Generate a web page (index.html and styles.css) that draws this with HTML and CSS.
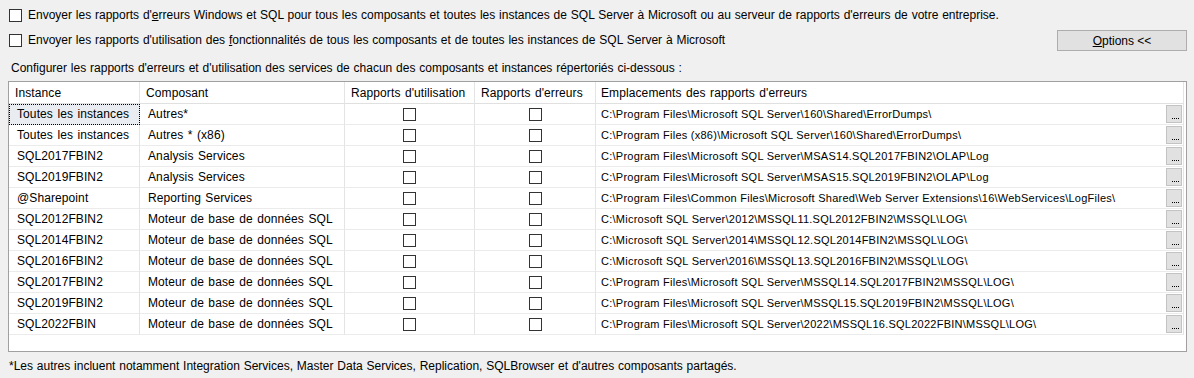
FILE: index.html
```html
<!DOCTYPE html>
<html lang="fr">
<head>
    <meta charset="UTF-8">
    <title>Rapports d'erreurs et d'utilisation</title>
    <link rel="stylesheet" href="styles.css">
</head>
<body>
    <div class="page">
        <label class="option first">
            <span class="box"></span>
            <span>Envoyer les rapports d'<u>e</u>rreurs Windows et SQL pour tous les composants et toutes les instances de SQL Server à Microsoft ou au serveur de rapports d'erreurs de votre entreprise.</span>
        </label>

        <div class="option-row">
            <label class="option">
                <span class="box"></span>
                <span>Envoyer les rapports d'utilisation des <u>f</u>onctionnalités de tous les composants et de toutes les instances de SQL Server à Microsoft</span>
            </label>
            <button class="btn"><u>O</u>ptions &lt;&lt;</button>
        </div>

        <p class="intro">Configurer les rapports d'erreurs et d'utilisation des services de chacun des composants et instances répertoriés ci-dessous :</p>

        <div class="grid" id="grid">
            <div class="head">Instance</div>
            <div class="head">Composant</div>
            <div class="head">Rapports d'utilisation</div>
            <div class="head">Rapports d'erreurs</div>
            <div class="head path">Emplacements des rapports d'erreurs</div>
        </div>

        <p class="note">*Les autres incluent notamment Integration Services, Master Data Services, Replication, SQLBrowser et d'autres composants partagés.</p>
    </div>

    <script>
        const rows = [
            ['Toutes les instances', 'Autres*', 'C:\\Program Files\\Microsoft SQL Server\\160\\Shared\\ErrorDumps\\'],
            ['Toutes les instances', 'Autres * (x86)', 'C:\\Program Files (x86)\\Microsoft SQL Server\\160\\Shared\\ErrorDumps\\'],
            ['SQL2017FBIN2', 'Analysis Services', 'C:\\Program Files\\Microsoft SQL Server\\MSAS14.SQL2017FBIN2\\OLAP\\Log'],
            ['SQL2019FBIN2', 'Analysis Services', 'C:\\Program Files\\Microsoft SQL Server\\MSAS15.SQL2019FBIN2\\OLAP\\Log'],
            ['@Sharepoint', 'Reporting Services', 'C:\\Program Files\\Common Files\\Microsoft Shared\\Web Server Extensions\\16\\WebServices\\LogFiles\\'],
            ['SQL2012FBIN2', 'Moteur de base de données SQL', 'C:\\Microsoft SQL Server\\2012\\MSSQL11.SQL2012FBIN2\\MSSQL\\LOG\\'],
            ['SQL2014FBIN2', 'Moteur de base de données SQL', 'C:\\Microsoft SQL Server\\2014\\MSSQL12.SQL2014FBIN2\\MSSQL\\LOG\\'],
            ['SQL2016FBIN2', 'Moteur de base de données SQL', 'C:\\Microsoft SQL Server\\2016\\MSSQL13.SQL2016FBIN2\\MSSQL\\LOG\\'],
            ['SQL2017FBIN2', 'Moteur de base de données SQL', 'C:\\Program Files\\Microsoft SQL Server\\MSSQL14.SQL2017FBIN2\\MSSQL\\LOG\\'],
            ['SQL2019FBIN2', 'Moteur de base de données SQL', 'C:\\Program Files\\Microsoft SQL Server\\MSSQL15.SQL2019FBIN2\\MSSQL\\LOG\\'],
            ['SQL2022FBIN', 'Moteur de base de données SQL', 'C:\\Program Files\\Microsoft SQL Server\\2022\\MSSQL16.SQL2022FBIN\\MSSQL\\LOG\\']
        ];

        const grid = document.getElementById('grid');

        rows.forEach((row, i) => {
            grid.insertAdjacentHTML('beforeend',
                `<div class="cell${i === 0 ? ' focus' : ''}">${row[0]}</div>` +
                `<div class="cell">${row[1]}</div>` +
                `<div class="cell center"><span class="box"></span></div>` +
                `<div class="cell center"><span class="box"></span></div>` +
                `<div class="cell path"><span class="path-text">${row[2]}</span><button class="browse"><span class="dots"></span></button></div>`
            );
        });
    </script>
</body>
</html>
```

FILE: styles.css
```css
body {
    margin: 0;
    background-color: #f0f0f0;
    font-family: "Liberation Sans", Arial, sans-serif;
    font-size: 12px;
    word-spacing: 0.5px;
    color: #000;
}

.page {
    padding: 0 7px 0 8px;
}

.option {
    display: flex;
    align-items: center;
    gap: 6px;
    line-height: 13px;
    white-space: nowrap;
}

.option.first {
    margin-top: 9px;
    margin-left: 1px;
}

.option-row {
    display: flex;
    justify-content: space-between;
    align-items: center;
    height: 21px;
    margin-top: 8px;
    margin-left: 1px;
}

.box {
    display: inline-block;
    width: 13px;
    height: 13px;
    box-sizing: border-box;
    border: 1px solid #333;
    background-color: #fff;
    flex-shrink: 0;
}

.btn {
    width: 130px;
    height: 21px;
    margin: 0;
    padding: 0;
    background-color: #e1e1e1;
    border: 1px solid #adadad;
    font-family: inherit;
    font-size: 12px;
    color: #000;
}

.intro {
    margin: 10px 0 0 3px;
    line-height: 14px;
}

.grid {
    display: grid;
    grid-template-columns: 131px 205px 130px 121px 1fr;
    grid-auto-rows: 21px;
    grid-template-rows: 22px;
    height: 271px;
    box-sizing: border-box;
    margin-top: 6px;
    padding-right: 2px;
    background-color: #fff;
    border: 1px solid #a0a0a0;
    align-content: start;
    letter-spacing: 0.1px;
    word-spacing: 1px;
}

.head,
.cell {
    display: flex;
    align-items: center;
    box-sizing: border-box;
    border-right: 1px solid #e4e4e4;
    border-bottom: 1px solid #ebebeb;
    white-space: nowrap;
    overflow: hidden;
}

.head {
    padding-left: 6px;
    border-bottom-color: #e0e0e0;
}

.cell {
    padding-left: 8px;
}

.head.path,
.cell.path {
    padding-left: 5px;
}

.cell.path {
    justify-content: space-between;
    padding-right: 1px;
}

.path-text {
    font-size: 11px;
    letter-spacing: 0.25px;
    word-spacing: 0;
}

.cell.center {
    justify-content: center;
    padding-left: 0;
}

.cell.focus {
    background-color: #e9edf2;
    outline: 1px dotted #000;
    outline-offset: -1px;
    border-bottom-color: transparent;
}

.browse {
    display: flex;
    align-items: flex-end;
    justify-content: flex-end;
    width: 16px;
    height: 18px;
    margin: 0;
    padding: 0 2px 3px 0;
    box-sizing: border-box;
    background-color: #e1e1e1;
    border: 1px solid #c3c3c3;
}

.dots {
    width: 7px;
    border-bottom: 1px dotted #000;
}

.note {
    margin: 7px 0 0 1px;
    line-height: 14px;
}
```
